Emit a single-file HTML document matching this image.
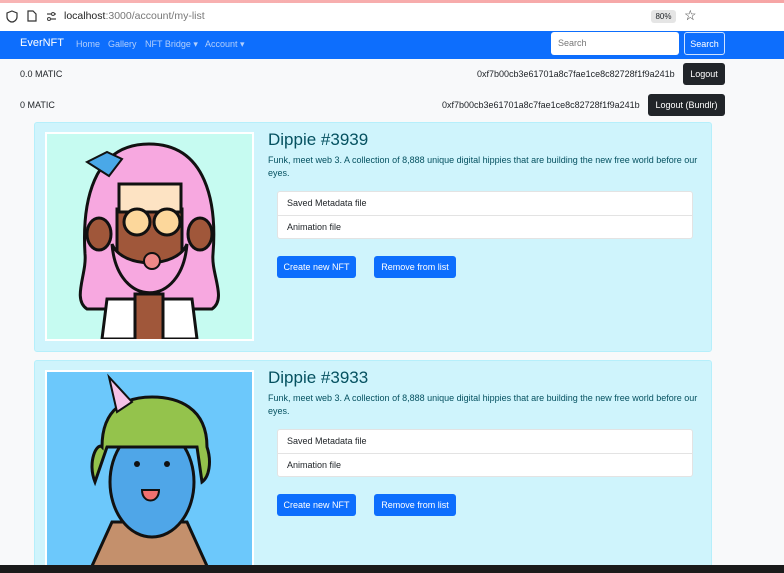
<!DOCTYPE html>
<html><head><style>
*{box-sizing:border-box;margin:0;padding:0}
html,body{width:784px;height:573px;overflow:hidden}
body{background:#f8f9fa;font-family:"Liberation Sans",sans-serif;position:relative;font-size:9px;color:#212529;white-space:nowrap}
.abs{position:absolute}
.top{left:0;top:0;width:784px;height:31px;background:#fff}
.top .g{left:0;top:0;width:784px;height:3px;background:linear-gradient(90deg,#f8b4b4,#f6a5a5)}
.nav{left:0;top:31px;width:784px;height:28px;background:#0d6efd}
.nav .l{position:absolute;top:8px;color:#b3cffc;font-size:9px}
.btn{position:absolute;border-radius:3px;color:#fff;font-size:9px;display:flex;align-items:center;justify-content:center}
.dark{background:#212529}
.blue{background:#0d6efd}
.card{left:34px;width:678px;background:#cff4fc;border:1px solid #b6effb;border-radius:3px;overflow:hidden}
.img{left:10px;top:9px;width:209px;border:2px solid #fff;overflow:hidden}
.t{left:233px;top:7px;font-size:17px;color:#055160}
.d{left:233px;top:31px;font-size:9px;line-height:13px;color:#055160;width:434px;white-space:normal}
.lg{left:242px;top:68px;width:416px;background:#fff;border:1px solid #e3e3e3;border-radius:3px}
.lg div{height:23px;line-height:23px;padding-left:9px;font-size:9px}
.lg div+div{border-top:1px solid #e3e3e3}
</style></head><body>
<div class="abs top"><div class="abs g"></div>
<svg class="abs" style="left:6px;top:10px" width="12" height="13"><path d="M6 1L11 3V7C11 10 8 12 6 12C4 12 1 10 1 7V3Z" fill="none" stroke="#333" stroke-width="1.2"/></svg>
<svg class="abs" style="left:27px;top:10px" width="10" height="12"><path d="M1 1H6L9 4V11H1Z" fill="none" stroke="#333" stroke-width="1.2"/></svg>
<svg class="abs" style="left:46px;top:12px" width="11" height="9"><path d="M1 2H10M1 7H10" stroke="#444" stroke-width="1.2"/><circle cx="7" cy="2" r="1.5" fill="#fff" stroke="#444"/><circle cx="3" cy="7" r="1.5" fill="#fff" stroke="#444"/></svg>
<div class="abs" style="left:64px;top:10px;font-size:10.5px;color:#222">localhost<span style="color:#777">:3000/account/my-list</span></div>
<div class="abs" style="left:651px;top:10px;width:25px;height:13px;background:#e5e5e5;border-radius:3px;font-size:8px;text-align:center;line-height:13px">80%</div>
<div class="abs" style="left:684px;top:7px;font-size:14px;color:#333">☆</div>
</div>
<div class="abs nav">
<div class="abs" style="left:20px;top:6px;color:#fff;font-size:11px">EverNFT</div>
<div class="l" style="left:76px">Home</div>
<div class="l" style="left:108px">Gallery</div>
<div class="l" style="left:145px">NFT Bridge ▾</div>
<div class="l" style="left:205px">Account ▾</div>
<div class="abs" style="left:551px;top:1px;width:128px;height:23px;background:#fff;border-radius:3px;color:#777;font-size:9px;padding:6px 7px">Search</div>
<div class="btn" style="left:684px;top:1px;width:41px;height:23px;border:1px solid #cfe2ff">Search</div>
</div>
<div class="abs" style="left:20px;top:69px">0.0 MATIC</div>
<div class="abs" style="left:477px;top:69px">0xf7b00cb3e61701a8c7fae1ce8c82728f1f9a241b</div>
<div class="btn dark" style="left:683px;top:63px;width:42px;height:22px">Logout</div>
<div class="abs" style="left:20px;top:100px">0 MATIC</div>
<div class="abs" style="left:442px;top:100px">0xf7b00cb3e61701a8c7fae1ce8c82728f1f9a241b</div>
<div class="btn dark" style="left:648px;top:94px;width:77px;height:22px">Logout (Bundlr)</div>

<div class="abs card" style="top:122px;height:230px">
<div class="abs img" style="height:209px;background:#c6fbf1">
<svg width="205" height="205" viewBox="0 0 205 205">
<path d="M40 175C25 165 40 140 38 120C35 70 45 10 102 10C160 10 170 70 166 120C164 140 180 165 165 175Z" fill="#f7a8e0" stroke="#111" stroke-width="3"/>
<path d="M55 205L60 165H145L150 205Z" fill="#fff" stroke="#111" stroke-width="3"/>
<rect x="88" y="160" width="28" height="50" fill="#a0573a" stroke="#111" stroke-width="3"/>
<ellipse cx="52" cy="100" rx="12" ry="16" fill="#a0573a" stroke="#111" stroke-width="3"/>
<ellipse cx="153" cy="100" rx="12" ry="16" fill="#a0573a" stroke="#111" stroke-width="3"/>
<path d="M70 75H135V120C135 135 70 135 70 120Z" fill="#a0573a" stroke="#111" stroke-width="3"/>
<rect x="72" y="50" width="62" height="28" fill="#fde3c3" stroke="#111" stroke-width="3"/>
<circle cx="90" cy="88" r="13" fill="#fcd79b" stroke="#111" stroke-width="3"/>
<circle cx="120" cy="88" r="13" fill="#fcd79b" stroke="#111" stroke-width="3"/>
<path d="M65 110C70 175 135 175 140 110C130 135 75 135 65 110Z" fill="#f7a8e0" stroke="#111" stroke-width="3"/>
<circle cx="105" cy="127" r="8" fill="#e88" stroke="#111" stroke-width="2"/>
<path d="M40 28L60 18L75 25L62 42Z" fill="#4aa8e8" stroke="#111" stroke-width="2"/>
</svg></div>
<div class="abs t">Dippie #3939</div>
<div class="abs d">Funk, meet web 3. A collection of 8,888 unique digital hippies that are building the new free world before our eyes.</div>
<div class="abs lg"><div>Saved Metadata file</div><div>Animation file</div></div>
<div class="btn blue" style="left:242px;top:133px;width:79px;height:22px">Create new NFT</div>
<div class="btn blue" style="left:339px;top:133px;width:82px;height:22px">Remove from list</div>
</div>

<div class="abs card" style="top:360px;height:220px">
<div class="abs img" style="height:220px;background:#6cc8fb">
<svg width="205" height="205" viewBox="0 0 205 205">
<path d="M40 205L65 150H140L165 205Z" fill="#c4906c" stroke="#111" stroke-width="3"/>
<ellipse cx="105" cy="110" rx="42" ry="55" fill="#4fa6e8" stroke="#111" stroke-width="3"/>
<path d="M48 110C40 90 50 70 55 75C55 35 80 25 105 25C130 25 160 35 160 75C165 90 162 105 155 110L150 75H60Z" fill="#94c34c" stroke="#111" stroke-width="3"/>
<path d="M62 5L85 30L70 40Z" fill="#f5c3e8" stroke="#111" stroke-width="2"/>
<circle cx="90" cy="92" r="3" fill="#111"/><circle cx="120" cy="92" r="3" fill="#111"/>
<path d="M95 118C95 132 112 132 112 118Z" fill="#f07070" stroke="#111" stroke-width="2"/>
</svg></div>
<div class="abs t">Dippie #3933</div>
<div class="abs d">Funk, meet web 3. A collection of 8,888 unique digital hippies that are building the new free world before our eyes.</div>
<div class="abs lg"><div>Saved Metadata file</div><div>Animation file</div></div>
<div class="btn blue" style="left:242px;top:133px;width:79px;height:22px">Create new NFT</div>
<div class="btn blue" style="left:339px;top:133px;width:82px;height:22px">Remove from list</div>
</div>
<div class="abs" style="left:0;top:565px;width:784px;height:8px;background:#1a1a1a"></div>
</body></html>
